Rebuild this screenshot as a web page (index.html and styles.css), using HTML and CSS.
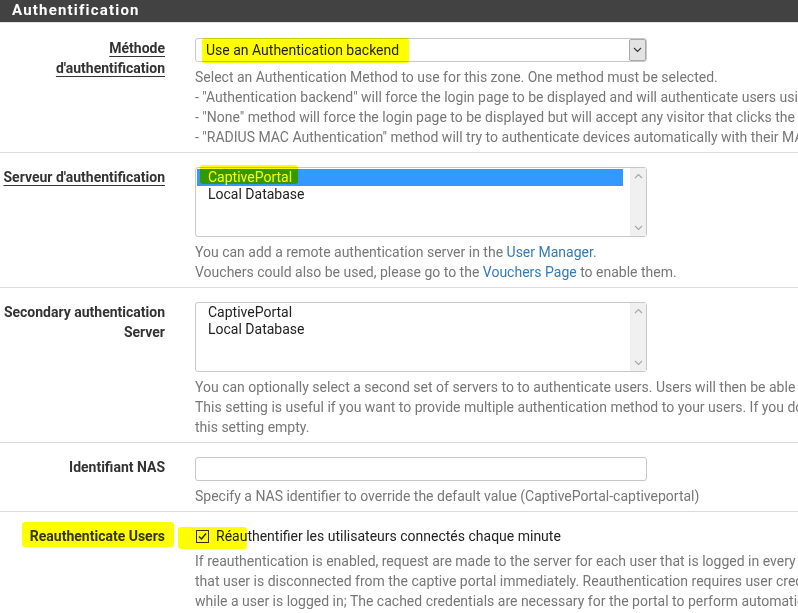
FILE: index.html
```html
<!DOCTYPE html>
<html lang="fr">
<head>
<meta charset="utf-8">
<title>Authentification</title>
<link rel="stylesheet" href="styles.css">
</head>
<body>
<div class="panel">
  <div class="heading">Authentification</div>

  <div class="row">
    <div class="lbl"><span class="u">Méthode<br>d'authentification</span></div>
    <div class="field">
      <div class="select">
        <span class="sel-text">Use an Authentication backend</span>
        <span class="arrow"><svg width="9" height="6" viewBox="0 0 9 6"><path d="M1 1 L4.5 4.5 L8 1" fill="none" stroke="#333" stroke-width="1.1"/></svg></span>
      </div>
      <div class="help">
        Select an Authentication Method to use for this zone. One method must be selected.<br>
        - "Authentication backend" will force the login page to be displayed and will authenticate users using their login and password, or using vouchers.<br>
        - "None" method will force the login page to be displayed but will accept any visitor that clicks the "submit" button.<br>
        - "RADIUS MAC Authentication" method will try to authenticate devices automatically with their MAC address without displaying any login page.
      </div>
    </div>
  </div>

  <div class="row">
    <div class="lbl"><span class="u">Serveur d'authentification</span></div>
    <div class="field">
      <div class="listbox">
        <div class="options">
          <div class="opt selected">CaptivePortal</div>
          <div class="opt">Local Database</div>
        </div>
        <div class="scroll">
          <svg width="9" height="6" viewBox="0 0 9 6"><path d="M1 5 L4.5 1.5 L8 5" fill="none" stroke="#a6a6a6" stroke-width="1.1"/></svg>
          <svg width="9" height="6" viewBox="0 0 9 6"><path d="M1 1 L4.5 4.5 L8 1" fill="none" stroke="#a6a6a6" stroke-width="1.1"/></svg>
        </div>
      </div>
      <div class="help">
        You can add a remote authentication server in the <a href="#">User Manager</a>.<br>
        Vouchers could also be used, please go to the <a href="#">Vouchers Page</a> to enable them.
      </div>
    </div>
  </div>

  <div class="row">
    <div class="lbl">Secondary authentication<br>Server</div>
    <div class="field">
      <div class="listbox">
        <div class="options">
          <div class="opt">CaptivePortal</div>
          <div class="opt">Local Database</div>
        </div>
        <div class="scroll">
          <svg width="9" height="6" viewBox="0 0 9 6"><path d="M1 5 L4.5 1.5 L8 5" fill="none" stroke="#a6a6a6" stroke-width="1.1"/></svg>
          <svg width="9" height="6" viewBox="0 0 9 6"><path d="M1 1 L4.5 4.5 L8 1" fill="none" stroke="#a6a6a6" stroke-width="1.1"/></svg>
        </div>
      </div>
      <div class="help">
        You can optionally select a second set of servers to to authenticate users. Users will then be able to login using separated authentication servers.<br>
        This setting is useful if you want to provide multiple authentication method to your users. If you don't need multiple authentication method, you can leave<br>
        this setting empty.
      </div>
    </div>
  </div>

  <div class="row">
    <div class="lbl">Identifiant NAS</div>
    <div class="field">
      <div class="input"></div>
      <div class="help">Specify a NAS identifier to override the default value (CaptivePortal-captiveportal)</div>
    </div>
  </div>

  <div class="row last">
    <div class="lbl">Reauthenticate Users</div>
    <div class="field">
      <div class="check-line">
        <span class="checkbox"><svg width="11" height="11" viewBox="0 0 11 11"><path d="M2 5.5 L4.5 8 L9 2.5" fill="none" stroke="#222" stroke-width="1.4"/></svg></span>
        <span>Réauthentifier les utilisateurs connectés chaque minute</span>
      </div>
      <div class="help">
        If reauthentication is enabled, request are made to the server for each user that is logged in every minute. If an access denied is received for a user,<br>
        that user is disconnected from the captive portal immediately. Reauthentication requires user credentials to be cached in the captive portal database<br>
        while a user is logged in; The cached credentials are necessary for the portal to perform automatic reauthentication requests.
      </div>
    </div>
  </div>

  <div class="hl hl-select"></div>
  <div class="hl hl-server"></div>
  <div class="hl hl-reauth"></div>
  <div class="hl hl-check"></div>
</div>
</body>
</html>
```

FILE: styles.css
```css
html, body {
  margin: 0;
  padding: 0;
  background: #fff;
}
body {
  width: 798px;
  height: 613px;
  overflow: hidden;
  font-family: Roboto, "Noto Sans", "Liberation Sans", sans-serif;
  color: #333;
}
.panel {
  position: relative;
  width: 1400px;
}
.heading {
  background: #424242;
  color: #fff;
  font-weight: bold;
  font-size: 15px;
  letter-spacing: 1.2px;
  height: 22px;
  line-height: 20px;
  padding-left: 12px;
  border-bottom: 1px solid #e4e4e4;
}
.row {
  display: flex;
  padding: 14px 0 5px;
  border-bottom: 1px solid #dcdcdc;
}
.heading + .row {
  padding-top: 15px;
}
.row.last {
  border-bottom: none;
}
.lbl {
  flex: none;
  width: 165px;
  text-align: right;
  font-weight: bold;
  font-size: 14px;
  line-height: 20px;
  color: #333;
}
.u {
  text-decoration: underline;
  text-underline-offset: 3px;
  text-decoration-thickness: 1px;
}
.field {
  margin-left: 30px;
}
.select, .input {
  box-sizing: border-box;
  width: 452px;
  height: 24px;
  border: 1px solid #c8c8c8;
  border-radius: 3px;
  display: flex;
  align-items: center;
  justify-content: space-between;
  font-size: 14px;
  color: #222;
  padding-left: 10px;
}
.arrow {
  box-sizing: border-box;
  width: 17px;
  height: 22px;
  background: #e3e3e3;
  border: 1px solid #a9a9a9;
  border-radius: 2px;
  display: flex;
  align-items: center;
  justify-content: center;
}
.listbox {
  position: relative;
  box-sizing: border-box;
  width: 452px;
  height: 70px;
  border: 1px solid #c8c8c8;
  border-radius: 3px;
  padding: 1px;
  font-size: 14px;
  color: #222;
}
.options {
  width: 426px;
}
.opt {
  height: 17px;
  line-height: 17px;
  padding-left: 11px;
}
.opt.selected {
  background: #3399ff;
  color: #fff;
}
.scroll {
  position: absolute;
  top: 0;
  right: 0;
  bottom: 0;
  width: 16px;
  background: #f0f0f0;
  display: flex;
  flex-direction: column;
  justify-content: space-between;
  align-items: center;
  padding: 5px 0;
  box-sizing: border-box;
}
.help {
  margin-top: 5px;
  font-size: 14px;
  line-height: 20px;
  color: #777;
  white-space: nowrap;
}
.help a {
  color: #337ab7;
  text-decoration: none;
}
.check-line {
  display: flex;
  align-items: center;
  height: 20px;
  font-size: 14px;
  color: #222;
}
.checkbox {
  box-sizing: border-box;
  width: 13px;
  height: 13px;
  border: 1px solid #333;
  margin-left: 1px;
  margin-right: 7px;
  display: flex;
  align-items: center;
  justify-content: center;
}
.hl {
  position: absolute;
  background: #ffff00;
  mix-blend-mode: multiply;
  border-radius: 3px;
}
.hl-select { left: 202px; top: 38px; width: 207px; height: 25px; }
.hl-server { left: 200px; top: 165px; width: 98px; height: 19px; }
.hl-reauth { left: 22px; top: 522px; width: 152px; height: 25px; }
.hl-check { left: 178px; top: 527px; width: 69px; height: 22px; }
```
